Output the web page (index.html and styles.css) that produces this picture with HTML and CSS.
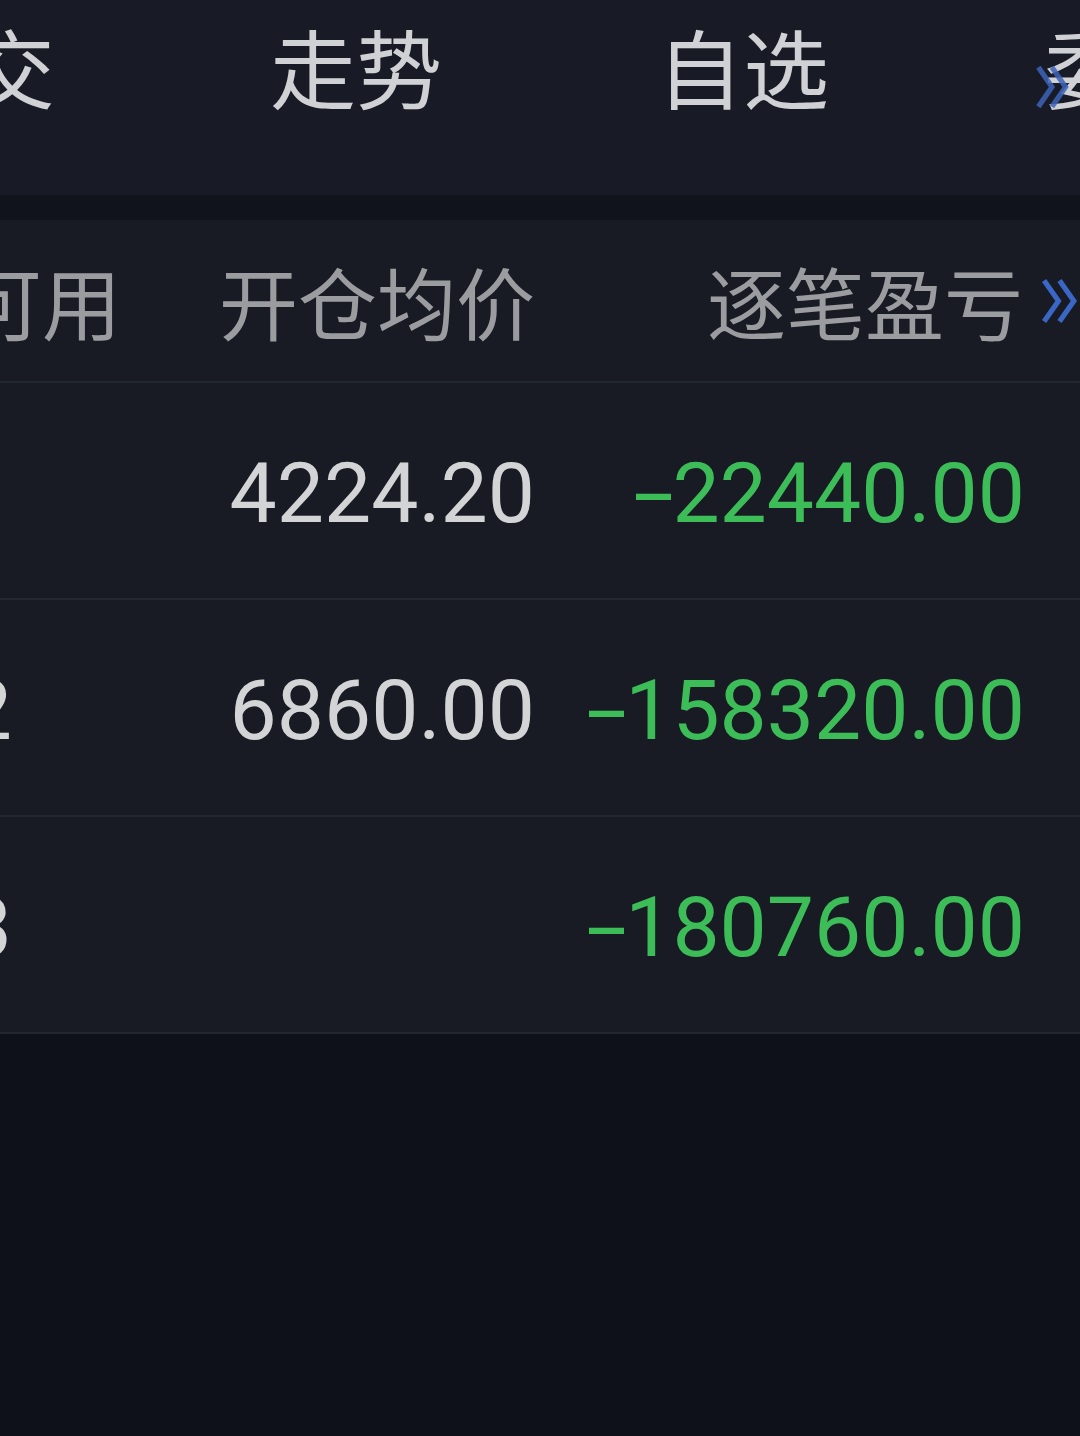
FILE: index.html
```html
<!DOCTYPE html>
<html lang="zh-CN">
<head>
<meta charset="utf-8">
<title>持仓</title>
<link rel="stylesheet" href="styles.css">
</head>
<body>
<div class="screen">
  <nav class="tabs">
    <div class="tab-track">
      <span class="tab">成交</span>
      <span class="tab">走势</span>
      <span class="tab">自选</span>
      <span class="tab tab-more">委托
        <svg class="swipe-hint" viewBox="0 0 36 46" aria-hidden="true">
          <polyline points="4,4 17,23 4,42" />
          <polyline points="17,4 30,23 17,42" />
        </svg>
      </span>
    </div>
  </nav>
  <div class="band"></div>
  <section class="table">
    <div class="row head">
      <div class="cell c1"><span>可用</span></div>
      <div class="cell c2"><span>开仓均价</span></div>
      <div class="cell c3"><span>逐笔盈亏</span></div>
      <div class="cell c4">
        <svg class="more" viewBox="0 0 36 46" aria-hidden="true">
          <polyline points="3,3 17,23 3,43" />
          <polyline points="18,3 32,23 18,43" />
        </svg>
      </div>
    </div>
    <div class="row data">
      <div class="cell c1 num"><span>1</span></div>
      <div class="cell c2 num"><span>4224.20</span></div>
      <div class="cell c3 num loss"><span><span class="sign">-</span>22440.00</span></div>
      <div class="cell c4"></div>
    </div>
    <div class="row data">
      <div class="cell c1 num"><span>2</span></div>
      <div class="cell c2 num"><span>6860.00</span></div>
      <div class="cell c3 num loss"><span><span class="sign">-</span>158320.00</span></div>
      <div class="cell c4"></div>
    </div>
    <div class="row data">
      <div class="cell c1 num"><span>3</span></div>
      <div class="cell c2 num"></div>
      <div class="cell c3 num loss"><span><span class="sign">-</span>180760.00</span></div>
      <div class="cell c4"></div>
    </div>
  </section>
</div>
</body>
</html>
```
FILE: styles.css
```css
html, body {
  margin: 0;
  padding: 0;
  background: #0e111a;
}

.screen {
  width: 1080px;
  height: 1436px;
  overflow: hidden;
  background: #0e111a;
  font-family: "Noto Sans CJK SC", "Noto Sans", sans-serif;
}

.tabs {
  height: 195px;
  background: #181b25;
  overflow: hidden;
}

.tab-track {
  display: flex;
  gap: 215px;
  margin-left: -117px;
  padding-top: 23px;
  white-space: nowrap;
}

.tab {
  font-size: 86px;
  line-height: 86px;
  color: #d0d1d4;
  flex: none;
}

.tab-more {
  position: relative;
}

.swipe-hint {
  position: absolute;
  left: -10px;
  top: 40px;
  width: 38px;
  height: 48px;
  fill: none;
  stroke: #3d63b8;
  stroke-width: 5;
  opacity: 0.85;
}

.band {
  height: 25px;
  background: #10131b;
}

.table {
  background: #181b24;
}

.row {
  display: grid;
  grid-template-columns: 118px 417px 490px 55px;
  align-items: center;
  border-bottom: 2px solid #232730;
}

.row.head {
  height: 161px;
}

.row.data {
  height: 215px;
}

.cell {
  display: flex;
  justify-content: flex-end;
  white-space: nowrap;
}

.head .cell {
  font-size: 79px;
  line-height: 1;
  color: #9b9ca0;
}

.head .c1 {
  padding-right: 0;
  margin-right: -3px;
}

.head .c3 {
  padding-right: 2px;
}

.c4 {
  justify-content: flex-start;
  align-items: center;
}

.more {
  width: 37px;
  height: 48px;
  margin-left: 16px;
  fill: none;
  stroke: #3a66c6;
  stroke-width: 5;
}

.num {
  font-family: Roboto, "Liberation Sans", sans-serif;
  font-size: 84px;
  line-height: 1;
  color: #d3d4d6;
  padding-top: 6px;
}

.data .c1 {
  padding-right: 106px;
}

.loss {
  color: #3dbd58;
}

.sign {
  display: inline-block;
  transform: scaleX(1.75);
  margin: 0 7px 0 6px;
}
```
